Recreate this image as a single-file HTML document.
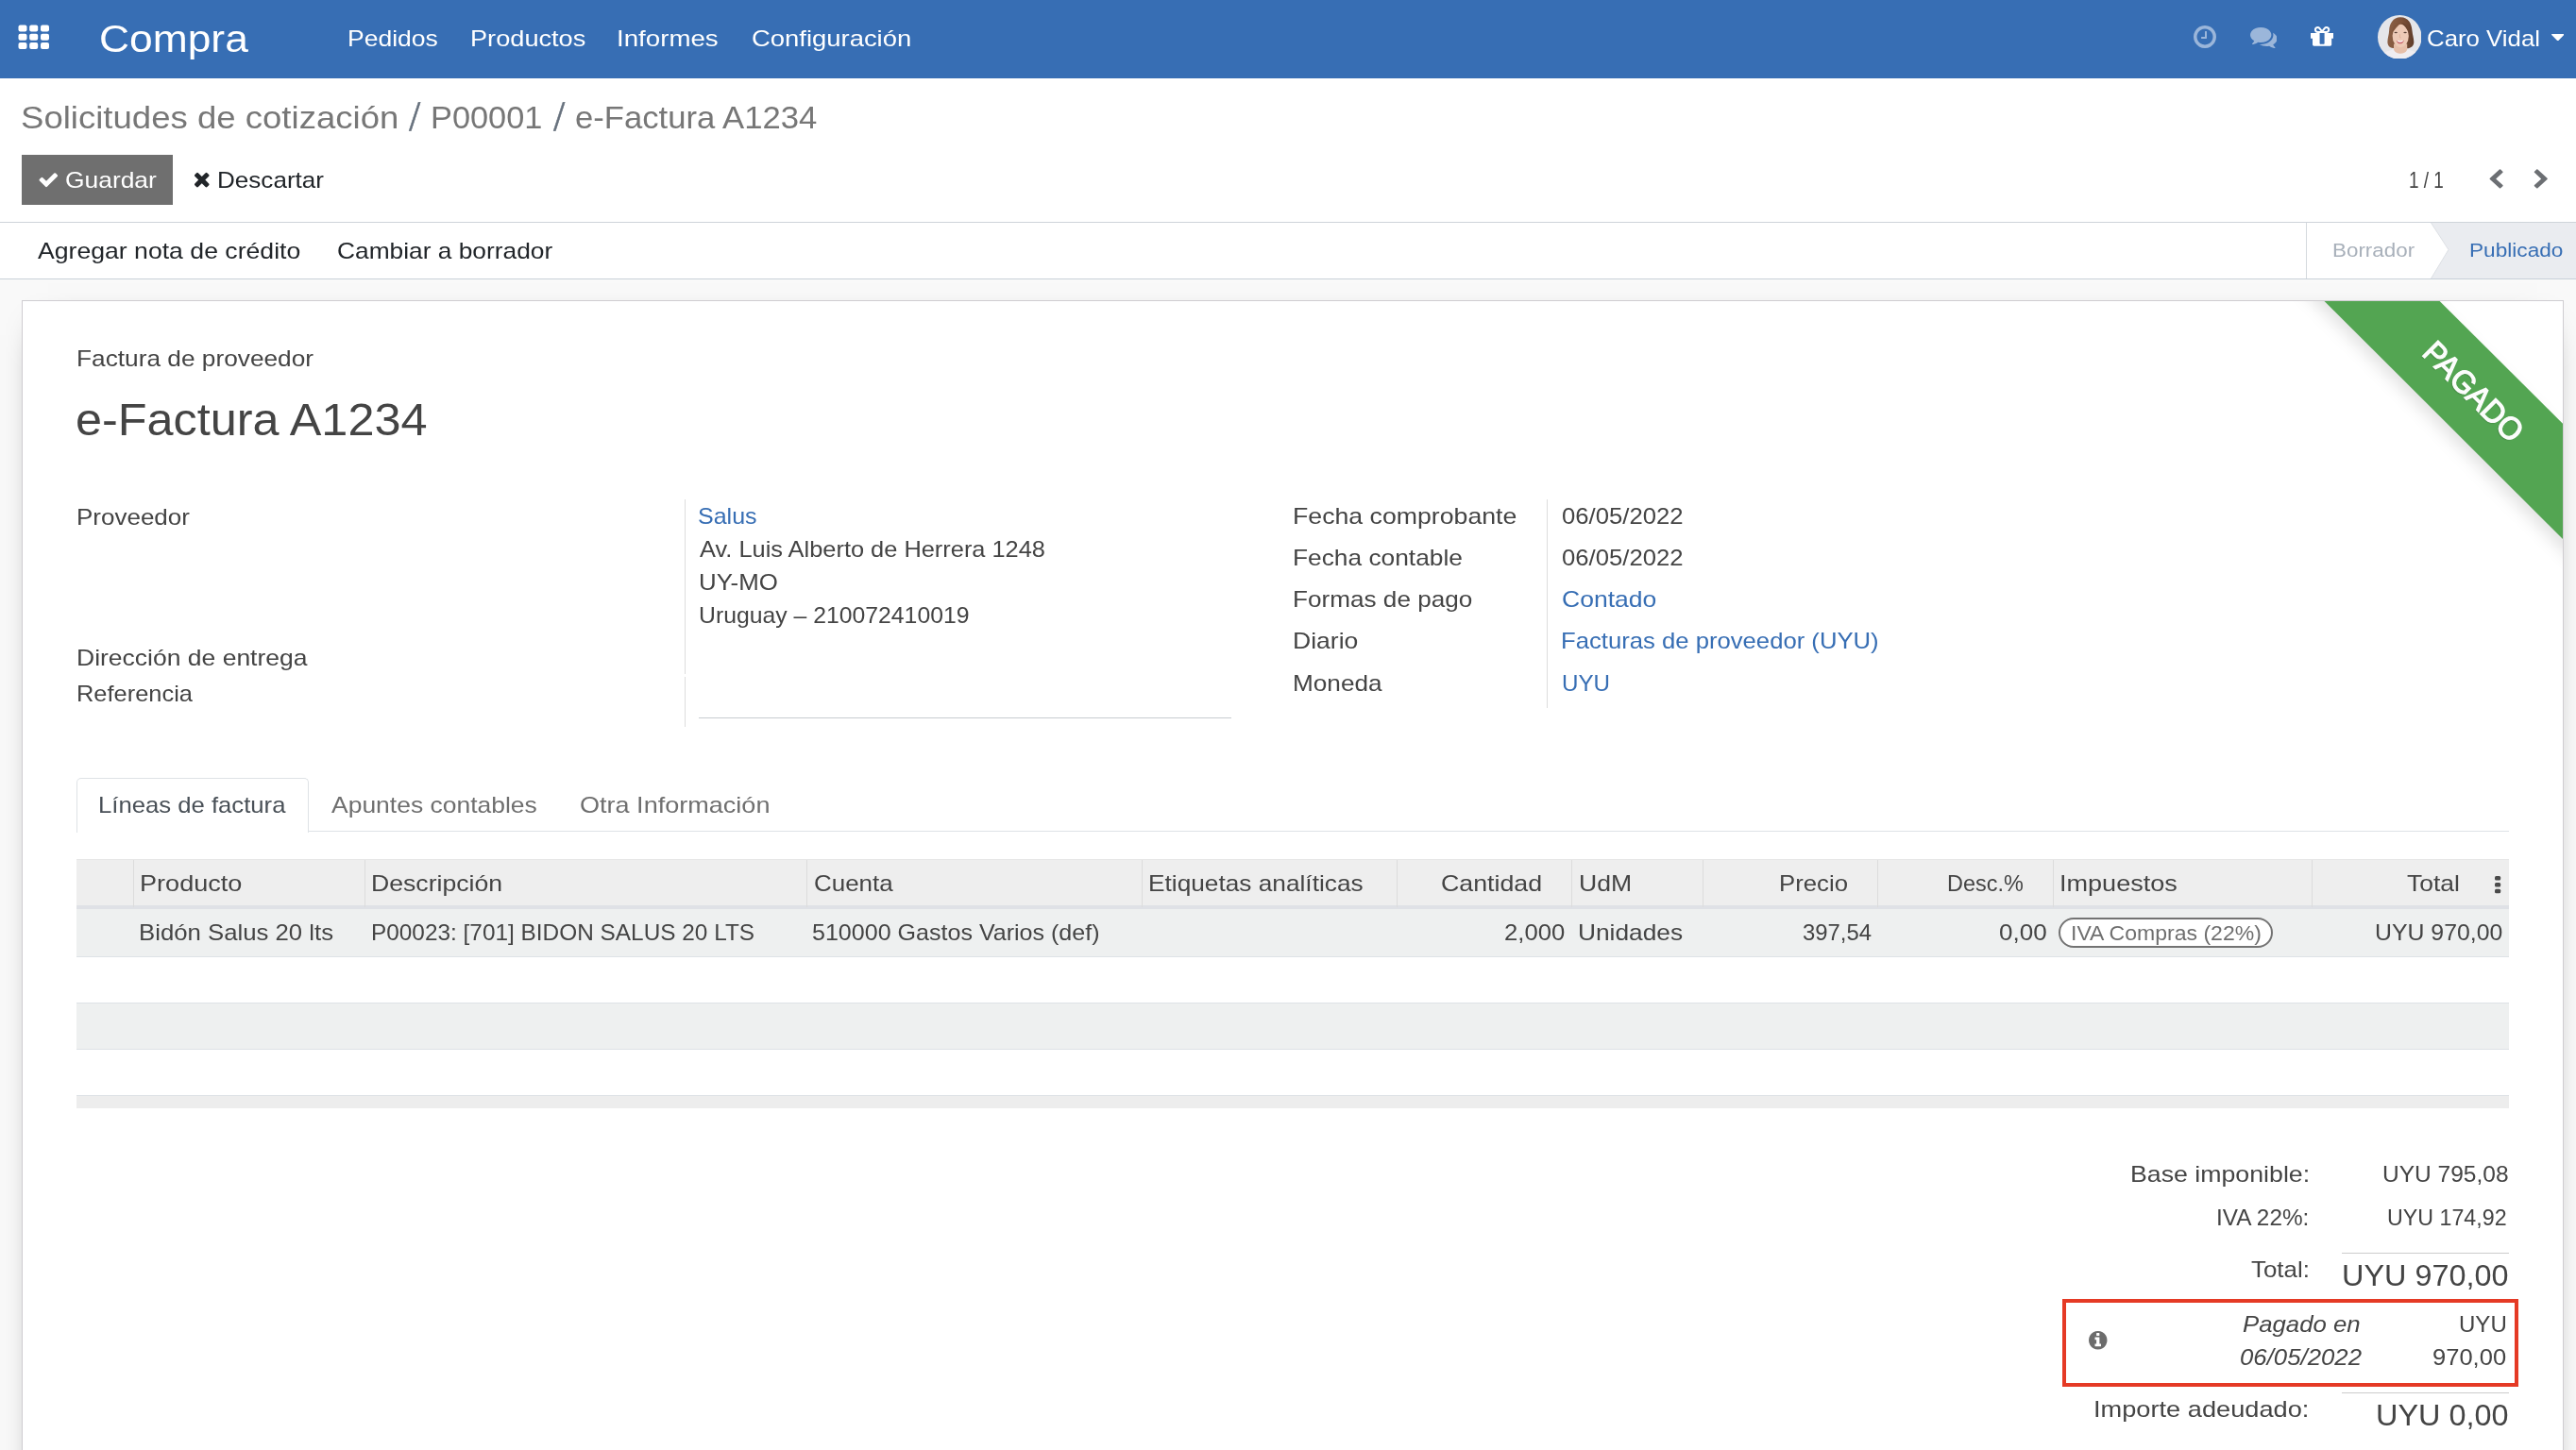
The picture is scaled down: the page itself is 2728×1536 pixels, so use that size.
<!DOCTYPE html>
<html lang="es">
<head>
<meta charset="utf-8">
<title>e-Factura A1234 - Odoo</title>
<style>
html,body{margin:0;padding:0;}
body{width:2728px;height:1536px;position:relative;overflow:hidden;background:#f9f9f9;font-family:"Liberation Sans",sans-serif;}
.abs,.t,svg.i{position:absolute;}
.t{white-space:pre;line-height:1;transform-origin:0 0;margin:0;padding:0;font-weight:400;text-decoration:none;display:block;}
nav,header,main,section,footer,ol,ul,li{margin:0;padding:0;list-style:none;display:block;}
#nav{left:0;top:0;width:2728px;height:83px;background:#376EB4;}
#cp{left:0;top:83px;width:2728px;height:152px;background:#fff;border-bottom:1px solid #ced4da;}
#sb{left:0;top:236px;width:2728px;height:59px;background:#fff;border-bottom:1px solid #c8d0d9;}
#sheet{left:23px;top:318px;width:2690px;height:1300px;background:#fff;border:1px solid #cfcdd1;box-shadow:0 9px 37px -28px #000;}
#save{left:23px;top:164px;width:160px;height:53px;background:#6f6f6f;}
.vl{width:1px;background:#ddd;}
.hl{height:1px;background:#ccc;}
.th{top:910px;height:49px;box-sizing:border-box;background:#eee;}
.cs{top:911px;height:50px;width:1px;background:#dcdcdc;}
</style>
</head>
<body>
<nav class="o_main_navbar">
<div id="nav" class="abs"></div>
<!-- apps icon -->
<svg class="i" style="left:19px;top:26px" width="34" height="27" viewBox="0 0 34 27">
 <g fill="#fff">
  <rect x="0.5" y="0.5" width="9" height="7" rx="2"/><rect x="12.2" y="0.5" width="9" height="7" rx="2"/><rect x="24" y="0.5" width="9" height="7" rx="2"/>
  <rect x="0.5" y="9.8" width="9" height="7" rx="2"/><rect x="12.2" y="9.8" width="9" height="7" rx="2"/><rect x="24" y="9.8" width="9" height="7" rx="2"/>
  <rect x="0.5" y="19" width="9" height="7" rx="2"/><rect x="12.2" y="19" width="9" height="7" rx="2"/><rect x="24" y="19" width="9" height="7" rx="2"/>
 </g>
</svg>
<!-- clock -->
<svg class="i" style="left:2322.5px;top:26.8px" width="24" height="24" viewBox="128 128 1536 1536"><path fill="#9bb6da" d="M1024 544v448q0 14-9 23t-23 9h-320q-14 0-23-9t-9-23v-64q0-14 9-23t23-9h224v-352q0-14 9-23t23-9h64q14 0 23 9t9 23zm416 352q0-148-73-273t-198-198-273-73-273 73-198 198-73 273 73 273 198 198 273 73 273-73 198-198 73-273zm224 0q0 209-103 385.500t-279.500 279.500-385.500 103-385.500-103-279.500-279.500-103-385.500 103-385.500 279.500-279.500 385.500-103 385.500 103 279.500 279.500 103 385.500z"/></svg>
<!-- comments -->
<svg class="i" style="left:2382.5px;top:29.3px" width="28.5" height="22" viewBox="0 256 1792 1408" preserveAspectRatio="none"><path fill="#9bb6da" d="M1408 768q0 139-94 257t-256.500 186.500-353.500 68.500q-86 0-176-16-124 88-278 128-36 9-86 16h-3q-11 0-20.500-8t-11.500-21q-1-3-1-6.500t.5-6.500 2-6l2.500-5 3.500-5.500 4-5 4.500-5 4-4.500q5-6 23-25t26-29.500 22.500-29 25-38.500 20.500-44q-124-72-195-177t-71-224q0-139 94-257t256.500-186.500 353.500-68.500 353.500 68.500 256.500 186.500 94 257zm384 256q0 120-71 224.500t-195 176.500q10 24 20.500 44t25 38.500 22.500 29 26 29.500 23 25q1 1 4 4.500t4.500 5 4 5 3.500 5.500l2.500 5 2 6 .5 6.500-1 6.500q-3 14-13 22t-22 7q-50-7-86-16-154-40-278-128-90 16-176 16-271 0-472-132 58 4 88 4 161 0 309-45t264-129q125-92 192-212t67-254q0-77-23-152 129 71 204 178t75 230z"/></svg>
<!-- gift -->
<svg class="i" style="left:2446.5px;top:27.8px" width="24.2" height="20.8" viewBox="128 192 1536 1344" preserveAspectRatio="none"><path fill="#fff" d="M1056 1356v-716h-320v716q0 25 18 38.500t46 13.500h192q28 0 46-13.500t18-38.500zm-456-844h195l-126-161q-26-31-69-31-40 0-68 28t-28 68 28 68 68 28zm688-96q0-40-28-68t-68-28q-43 0-69 31l-125 161h194q40 0 68-28t28-68zm376 256v320q0 14-9 23t-23 9h-96v416q0 40-28 68t-68 28h-1088q-40 0-68-28t-28-68v-416h-96q-14 0-23-9t-9-23v-320q0-14 9-23t23-9h440q-93 0-158.500-65.500t-65.500-158.500 65.500-158.500 158.500-65.500q107 0 168 77l128 165 128-165q61-77 168-77 93 0 158.500 65.500t65.500 158.500-65.500 158.500-158.500 65.500h440q14 0 23 9t9 23z"/></svg>
<!-- avatar -->
<svg class="i" style="left:2517.7px;top:15.9px" width="46.6" height="46.6" viewBox="0 0 46 46">
 <defs><clipPath id="av"><circle cx="23" cy="23" r="23"/></clipPath>
 <linearGradient id="hg" x1="0" x2="1" y1="0" y2="0"><stop offset="0" stop-color="#8b6045"/><stop offset=".55" stop-color="#7d5239"/><stop offset="1" stop-color="#5e3c2a"/></linearGradient></defs>
 <g clip-path="url(#av)">
  <rect width="46" height="46" fill="#e5e6ea"/>
  <path d="M24 2.300C16 2.300 12.300 9 12 16c-.2 5-2.200 9.500-1.600 13.500.5 3 2.500 4.800 5.500 5l16 .2c3-.2 5.300-2 5.800-5 .600-4.300-1.300-8.700-1.700-13.700C35.500 9 32 2.300 24 2.300z" fill="url(#hg)"/>
  <path d="M4 46c.3-5.500 3.500-7.800 9-9l4-1.500h13.500l4 1.500c5.500 1.200 8.700 3.500 9 9z" fill="#efedf1"/>
  <path d="M16.800 30h14v6.200c-2 5.300-12 5.300-14 0z" fill="#e6bfa9"/>
  <ellipse cx="23.900" cy="21.700" rx="8.500" ry="12" fill="#edcab6"/>
  <path d="M15.200 18.500c.3-6.500 3.800-10.300 9.300-10.300-3 2.300-6 6-9.300 10.300z" fill="#81563c"/>
  <path d="M24.500 8.200c5 0 8 3.800 8.300 10.500-2.300-4.500-5-8-8.300-10.500z" fill="#6a4530"/>
  <path d="M19.500 26.300q4 1 8 0q-1 3.600-4 3.600t-4-3.600z" fill="#c9656c"/>
  <path d="M20 26.500q3.500.8 7 0q-.8 1.900-3.500 1.900t-3.500-1.900z" fill="#fff"/>
  <ellipse cx="19" cy="18.300" rx="1.700" ry=".75" fill="#5b4338"/><ellipse cx="28.700" cy="18.300" rx="1.700" ry=".75" fill="#5b4338"/>
  <path d="M23.200 20v3.500l1.400.2" fill="none" stroke="#d9ac95" stroke-width=".7"/>
 </g>
</svg>
<!-- caret -->
<svg class="i" style="left:2701.5px;top:36px" width="13.5" height="7.300" viewBox="0 0 13.5 7.3"><path fill="#fff" d="M0.600 0h12.300q.9.100.4.900l-5.900 6q-.65.600-1.300 0l-5.900-6q-.5-.8.400-.9z"/></svg>

<a class="t o_menu_brand" style="left:104.59px;top:21px;font-size:40px;color:#fff;transform:scaleX(1.1092);">Compra</a>
<a class="t o_menu_entry" style="left:367.66px;top:29px;font-size:24px;color:#fff;transform:scaleX(1.1046);">Pedidos</a>
<a class="t o_menu_entry" style="left:497.60px;top:29px;font-size:24px;color:#fff;transform:scaleX(1.1319);">Productos</a>
<a class="t o_menu_entry" style="left:653.36px;top:29px;font-size:24px;color:#fff;transform:scaleX(1.1535);">Informes</a>
<a class="t o_menu_entry" style="left:795.52px;top:29px;font-size:24px;color:#fff;transform:scaleX(1.1424);">Configuración</a>
<span class="t oe_topbar_name" style="left:2569.60px;top:29px;font-size:24px;color:#fff;transform:scaleX(1.0749);">Caro Vidal</span>
</nav>

<header class="o_control_panel">
<div id="cp" class="abs"></div>
<div id="save" class="abs"></div>
<svg class="i" style="left:40.2px;top:178.6px" width="22.6" height="22.6" viewBox="0 0 1792 1792"><path fill="#fff" d="M1671 566q0 40-28 68l-724 724-136 136q-28 28-68 28t-68-28l-136-136-362-362q-28-28-28-68t28-68l136-136q28-28 68-28t68 28l294 295 656-657q28-28 68-28t68 28l136 136q28 28 28 68z"/></svg>
<svg class="i" style="left:201.9px;top:178.4px" width="23.5" height="23.5" viewBox="0 0 1792 1792"><path fill="#212529" d="M1490 1322q0 40-28 68l-136 136q-28 28-68 28t-68-28l-294-294-294 294q-28 28-68 28t-68-28l-136-136q-28-28-28-68t28-68l294-294-294-294q-28-28-28-68t28-68l136-136q28-28 68-28t68 28l294 294 294-294q28-28 68-28t68 28l136 136q28 28 28 68t-28 68l-294 294 294 294q28 28 28 68z"/></svg>
<svg class="i" style="left:2631.2px;top:179px" width="24.4" height="22.4" viewBox="0 0 1792 1792" preserveAspectRatio="none"><path fill="#6c6f73" d="M1427 301l-531 531 531 531q19 19 19 45t-19 45l-166 166q-19 19-45 19t-45-19l-742-742q-19-19-19-45t19-45l742-742q19-19 45-19t45 19l166 166q19 19 19 45t-19 45z"/></svg>
<svg class="i" style="left:2678.7px;top:179px" width="24.4" height="22.4" viewBox="0 0 1792 1792" preserveAspectRatio="none"><path fill="#6c6f73" d="M1363 877l-742 742q-19 19-45 19t-45-19l-166-166q-19-19-19-45t19-45l531-531-531-531q-19-19-19-45t19-45l166-166q19-19 45-19t45 19l742 742q19 19 19 45t-19 45z"/></svg>

<span class="t breadcrumb" style="left:22.09px;top:108px;font-size:33px;color:#777777;transform:scaleX(1.1077);">Solicitudes de cotización</span>
<span class="t breadcrumb-sep" style="left:438.2px;top:104.4px;font-size:28px;color:#66707c;-webkit-text-stroke:.5px #66707c;opacity:.99;transform:skewX(-8deg) scaleY(1.46);">/</span>
<span class="t breadcrumb-item" style="left:455.98px;top:108px;font-size:33px;color:#777777;transform:scaleX(1.0409);">P00001</span>
<span class="t breadcrumb-sep" style="left:591.2px;top:104.4px;font-size:28px;color:#66707c;-webkit-text-stroke:.5px #66707c;opacity:.99;transform:skewX(-8deg) scaleY(1.46);">/</span>
<span class="t breadcrumb-item active" style="left:608.65px;top:108px;font-size:33px;color:#777777;transform:scaleX(1.0505);">e-Factura A1234</span>
<span class="t btn btn-primary o_form_button_save" style="left:68.59px;top:179px;font-size:24px;color:#fff;transform:scaleX(1.0998);">Guardar</span>
<span class="t btn btn-secondary o_form_button_cancel" style="left:229.70px;top:179px;font-size:24px;color:#212529;transform:scaleX(1.0862);">Descartar</span>
<span class="t o_pager_counter" style="left:2551.08px;top:179px;font-size:24px;color:#444444;transform:scaleX(0.7904);">1 / 1</span>
</header>

<section class="o_form_statusbar">
<div id="sb" class="abs"></div>
<div class="abs" style="left:2442px;top:236px;width:1px;height:59px;background:#d5d9de"></div>
<svg class="i" style="left:2573.8px;top:236px" width="155" height="59" viewBox="0 0 155 59"><path d="M0.500 0H155V59H0.500L19 28.500z" fill="#eaecf0"/><path d="M0.500 0L19 28.500L0.500 59" fill="none" stroke="#dcdfe4" stroke-width="1"/></svg>

<span class="t btn btn-secondary" style="left:40.15px;top:254px;font-size:24px;color:#212529;transform:scaleX(1.1093);">Agregar nota de crédito</span>
<span class="t btn btn-secondary" style="left:356.58px;top:254px;font-size:24px;color:#212529;transform:scaleX(1.0966);">Cambiar a borrador</span>
<span class="t o_arrow_button" style="left:2470.15px;top:255px;font-size:20.5px;color:#A8B0BA;transform:scaleX(1.0920);">Borrador</span>
<span class="t o_arrow_button btn-primary" style="left:2615.13px;top:255px;font-size:20.5px;color:#376EB4;transform:scaleX(1.1039);">Publicado</span>
</section>

<main class="o_form_sheet_bg">
<div id="sheet" class="abs"></div>
<!-- ribbon -->
<svg class="i" style="left:2404px;top:319px" width="310" height="300" viewBox="2404 319 310 300">
 <defs><filter id="rs" x="-30%" y="-30%" width="160%" height="160%"><feGaussianBlur stdDeviation="8"/></filter></defs>
 <path d="M2361.5 218L2483.600 218L2814 548.400L2814 670.500z" transform="translate(-6.400,6.400)" fill="rgba(0,0,0,.11)" filter="url(#rs)"/>
 <path d="M2461.500 319H2583.600L2714 448.800V571z" fill="#53A552"/>
</svg>
<div class="abs" style="left:2619.2px;top:415.2px;width:0;height:0;"><div class="abs" id="rib" style="width:300px;left:-150px;top:-20px;height:40px;line-height:40px;text-align:center;font-size:33.5px;color:#fff;-webkit-text-stroke:1.3px #fff;opacity:.99;text-shadow:0 1.5px 1.5px rgba(0,0,0,.22);transform:rotate(45deg) scaleX(.955);">PAGADO</div></div>

<span class="t" style="left:81.48px;top:368px;font-size:24px;color:#444444;transform:scaleX(1.0941);">Factura de proveedor</span>
<h1 class="t o_field_char" style="left:80.41px;top:421px;font-size:48px;color:#444444;transform:scaleX(1.0494);">e-Factura A1234</h1>

<section class="o_group">
<div class="abs vl" style="left:725px;top:529px;height:185px"></div>
<div class="abs vl" style="left:725px;top:717px;height:53px"></div>
<div class="abs vl" style="left:1638px;top:529px;height:221px"></div>
<div class="abs hl" style="left:740px;top:760px;width:564px;background:#c8ccd0"></div>

<label class="t o_form_label" style="left:81.21px;top:536px;font-size:24px;color:#444444;transform:scaleX(1.0828);">Proveedor</label>
<label class="t o_form_label" style="left:81.16px;top:685px;font-size:24px;color:#444444;transform:scaleX(1.1041);">Dirección de entrega</label>
<label class="t o_form_label" style="left:81.26px;top:723px;font-size:24px;color:#444444;transform:scaleX(1.0590);">Referencia</label>
<a class="t o_form_uri" style="left:739.43px;top:535px;font-size:24px;color:#376EB4;transform:scaleX(1.0425);">Salus</a>
<span class="t" style="left:741.16px;top:570px;font-size:24px;color:#444444;transform:scaleX(1.0578);">Av. Luis Alberto de Herrera 1248</span>
<span class="t" style="left:739.55px;top:605px;font-size:24px;color:#444444;transform:scaleX(1.0773);">UY-MO</span>
<span class="t" style="left:739.63px;top:640px;font-size:24px;color:#444444;transform:scaleX(1.0321);">Uruguay – 210072410019</span>
<label class="t o_form_label" style="left:1369.15px;top:535px;font-size:24px;color:#444444;transform:scaleX(1.1120);">Fecha comprobante</label>
<label class="t o_form_label" style="left:1369.18px;top:579px;font-size:24px;color:#444444;transform:scaleX(1.0962);">Fecha contable</label>
<label class="t o_form_label" style="left:1369.19px;top:623px;font-size:24px;color:#444444;transform:scaleX(1.0893);">Formas de pago</label>
<label class="t o_form_label" style="left:1369.16px;top:667px;font-size:24px;color:#444444;transform:scaleX(1.1054);">Diario</label>
<label class="t o_form_label" style="left:1369.19px;top:712px;font-size:24px;color:#444444;transform:scaleX(1.0903);">Moneda</label>
<span class="t" style="left:1654.30px;top:535px;font-size:24px;color:#444444;transform:scaleX(1.0705);">06/05/2022</span>
<span class="t" style="left:1654.30px;top:579px;font-size:24px;color:#444444;transform:scaleX(1.0705);">06/05/2022</span>
<a class="t o_form_uri" style="left:1654.07px;top:623px;font-size:24px;color:#376EB4;transform:scaleX(1.1046);">Contado</a>
<a class="t o_form_uri" style="left:1653.24px;top:667px;font-size:24px;color:#376EB4;transform:scaleX(1.0694);">Facturas de proveedor (UYU)</a>
<a class="t o_form_uri" style="left:1653.68px;top:712px;font-size:24px;color:#376EB4;transform:scaleX(1.0070);">UYU</a>
</section>

<section class="o_notebook">
<div class="abs" style="left:81px;top:880px;width:2576px;height:1px;background:#dee2e6"></div>
<div class="abs" style="left:81px;top:824px;width:243.500px;height:57px;background:#fff;border:1px solid #dee2e6;border-bottom:none;border-radius:5px 5px 0 0"></div>

<a class="t nav-link active" style="left:104.23px;top:841px;font-size:24px;color:#495057;transform:scaleX(1.0700);">Líneas de factura</a>
<a class="t nav-link" style="left:350.65px;top:841px;font-size:24px;color:#6f6f6f;transform:scaleX(1.1029);">Apuntes contables</a>
<a class="t nav-link" style="left:614.10px;top:841px;font-size:24px;color:#6f6f6f;transform:scaleX(1.1271);">Otra Información</a>
<div class="o_list_view">
<div class="abs th" style="left:81px;width:2576px;border-top:1px solid #e6e6e6"></div>
<div class="abs" style="left:81px;top:959px;width:2576px;height:3.5px;background:#dfe1e6"></div>
<div class="abs cs" style="left:141px"></div><div class="abs cs" style="left:386px"></div><div class="abs cs" style="left:854px"></div><div class="abs cs" style="left:1209px"></div><div class="abs cs" style="left:1479px"></div><div class="abs cs" style="left:1664px"></div><div class="abs cs" style="left:1803px"></div><div class="abs cs" style="left:1988px"></div><div class="abs cs" style="left:2174px"></div><div class="abs cs" style="left:2448px"></div>
<div class="abs" style="left:81px;top:962.500px;width:2576px;height:50px;background:#eef0f0;border-bottom:1px solid #dee2e6"></div>
<div class="abs" style="left:81px;top:1061.500px;width:2576px;height:48px;background:#eef0f0;border-top:1px solid #dee2e6;border-bottom:1px solid #dee2e6"></div>
<div class="abs" style="left:81px;top:1159.500px;width:2576px;height:13.500px;background:#ededed;border-top:1px solid #dee2e6"></div>
<!-- ellipsis-v -->
<svg class="i" style="left:2641.9px;top:927.7px" width="7" height="19" viewBox="0 0 7 19"><g fill="#4a4a4a"><rect x="0" y="0" width="6.2" height="4.5" rx="1.5"/><rect x="0" y="6.9" width="6.2" height="4.5" rx="1.5"/><rect x="0" y="13.8" width="6.2" height="4.5" rx="1.5"/></g></svg>
<!-- tax badge -->
<div class="abs" style="left:2180px;top:971.500px;width:223px;height:28.500px;border:2.5px solid #737373;border-radius:18px;background:#fff"></div>

<span class="t" style="left:148.11px;top:924px;font-size:24px;color:#444444;transform:scaleX(1.1284);">Producto</span>
<span class="t" style="left:393.15px;top:924px;font-size:24px;color:#444444;transform:scaleX(1.1097);">Descripción</span>
<span class="t" style="left:861.60px;top:924px;font-size:24px;color:#444444;transform:scaleX(1.0817);">Cuenta</span>
<span class="t" style="left:1215.93px;top:924px;font-size:24px;color:#444444;transform:scaleX(1.0936);">Etiquetas analíticas</span>
<span class="t" style="left:1526.30px;top:924px;font-size:24px;color:#444444;transform:scaleX(1.1151);">Cantidad</span>
<span class="t" style="left:1672.00px;top:924px;font-size:24px;color:#444444;transform:scaleX(1.1074);">UdM</span>
<span class="t" style="left:1884.13px;top:924px;font-size:24px;color:#444444;transform:scaleX(1.0722);">Precio</span>
<span class="t" style="left:2062.23px;top:924px;font-size:24px;color:#444444;transform:scaleX(0.9766);">Desc.%</span>
<span class="t" style="left:2180.92px;top:924px;font-size:24px;color:#444444;transform:scaleX(1.1276);">Impuestos</span>
<span class="t" style="left:2549.46px;top:924px;font-size:24px;color:#444444;transform:scaleX(1.1028);">Total</span>
<span class="t" style="left:147.23px;top:976px;font-size:24px;color:#444444;transform:scaleX(1.0723);">Bidón Salus 20 lts</span>
<span class="t" style="left:392.60px;top:976px;font-size:24px;color:#444444;transform:scaleX(1.0157);">P00023: [701] BIDON SALUS 20 LTS</span>
<span class="t" style="left:860.26px;top:976px;font-size:24px;color:#444444;transform:scaleX(1.0438);">510000 Gastos Varios (def)</span>
<span class="t" style="left:1592.62px;top:976px;font-size:24px;color:#444444;transform:scaleX(1.0700);">2,000</span>
<span class="t" style="left:1671.27px;top:976px;font-size:24px;color:#444444;transform:scaleX(1.0955);">Unidades</span>
<span class="t" style="left:1908.67px;top:976px;font-size:24px;color:#444444;transform:scaleX(0.9950);">397,54</span>
<span class="t" style="left:2116.59px;top:976px;font-size:24px;color:#444444;transform:scaleX(1.0857);">0,00</span>
<span class="t badge badge-pill" style="left:2192.74px;top:978px;font-size:22px;color:#6f6f6f;transform:scaleX(1.0471);">IVA Compras (22%)</span>
<span class="t" style="left:2514.53px;top:976px;font-size:24px;color:#444444;transform:scaleX(1.0347);">UYU 970,00</span>
</div>
</section>

<footer class="oe_subtotal_footer">
<div class="abs hl" style="left:2480px;top:1327px;width:177px"></div>
<div class="abs hl" style="left:2480px;top:1475px;width:177px"></div>
<div class="abs" style="left:2184px;top:1376px;width:475px;height:84.500px;border:4px solid #e53a25"></div>
<svg class="i" style="left:2212px;top:1410px" width="19.500" height="19.500" viewBox="128 128 1536 1536"><path fill="#6c6c6c" d="M1152 1376v-160q0-14-9-23t-23-9h-96v-512q0-14-9-23t-23-9h-320q-14 0-23 9t-9 23v160q0 14 9 23t23 9h96v320h-96q-14 0-23 9t-9 23v160q0 14 9 23t23 9h448q14 0 23-9t9-23zm-128-896v-160q0-14-9-23t-23-9h-192q-14 0-23 9t-9 23v160q0 14 9 23t23 9h192q14 0 23-9t9-23zm640 416q0 209-103 385.500t-279.500 279.500-385.500 103-385.500-103-279.500-279.500-103-385.500 103-385.500 279.500-279.500 385.500-103 385.500 103 279.500 279.500 103 385.500z"/></svg>

<label class="t o_form_label" style="left:2255.64px;top:1232px;font-size:24px;color:#444444;transform:scaleX(1.1132);">Base imponible:</label>
<span class="t" style="left:2522.65px;top:1232px;font-size:24px;color:#444444;transform:scaleX(1.0218);">UYU 795,08</span>
<label class="t o_form_label" style="left:2347.18px;top:1278px;font-size:24px;color:#444444;transform:scaleX(1.0141);">IVA 22%:</label>
<span class="t" style="left:2528.25px;top:1278px;font-size:24px;color:#444444;transform:scaleX(0.9680);">UYU 174,92</span>
<label class="t o_form_label" style="left:2383.63px;top:1333px;font-size:24px;color:#444444;transform:scaleX(1.0784);">Total:</label>
<span class="t" style="left:2479.95px;top:1336px;font-size:31px;color:#444444;transform:scaleX(1.0451);">UYU 970,00</span>
<span class="t" style="left:2375.40px;top:1391px;font-size:24px;color:#444444;transform:scaleX(1.0739);font-style:italic;">Pagado en</span>
<span class="t" style="left:2371.73px;top:1426px;font-size:24px;color:#444444;transform:scaleX(1.0737);font-style:italic;">06/05/2022</span>
<span class="t" style="left:2603.69px;top:1391px;font-size:24px;color:#444444;transform:scaleX(1.0016);">UYU</span>
<span class="t" style="left:2576.20px;top:1426px;font-size:24px;color:#444444;transform:scaleX(1.0637);">970,00</span>
<label class="t o_form_label" style="left:2217.41px;top:1481px;font-size:24px;color:#444444;transform:scaleX(1.1332);">Importe adeudado:</label>
<span class="t" style="left:2515.70px;top:1484px;font-size:31px;color:#444444;transform:scaleX(1.0449);">UYU 0,00</span>
</footer>
</main>
</body>
</html>
